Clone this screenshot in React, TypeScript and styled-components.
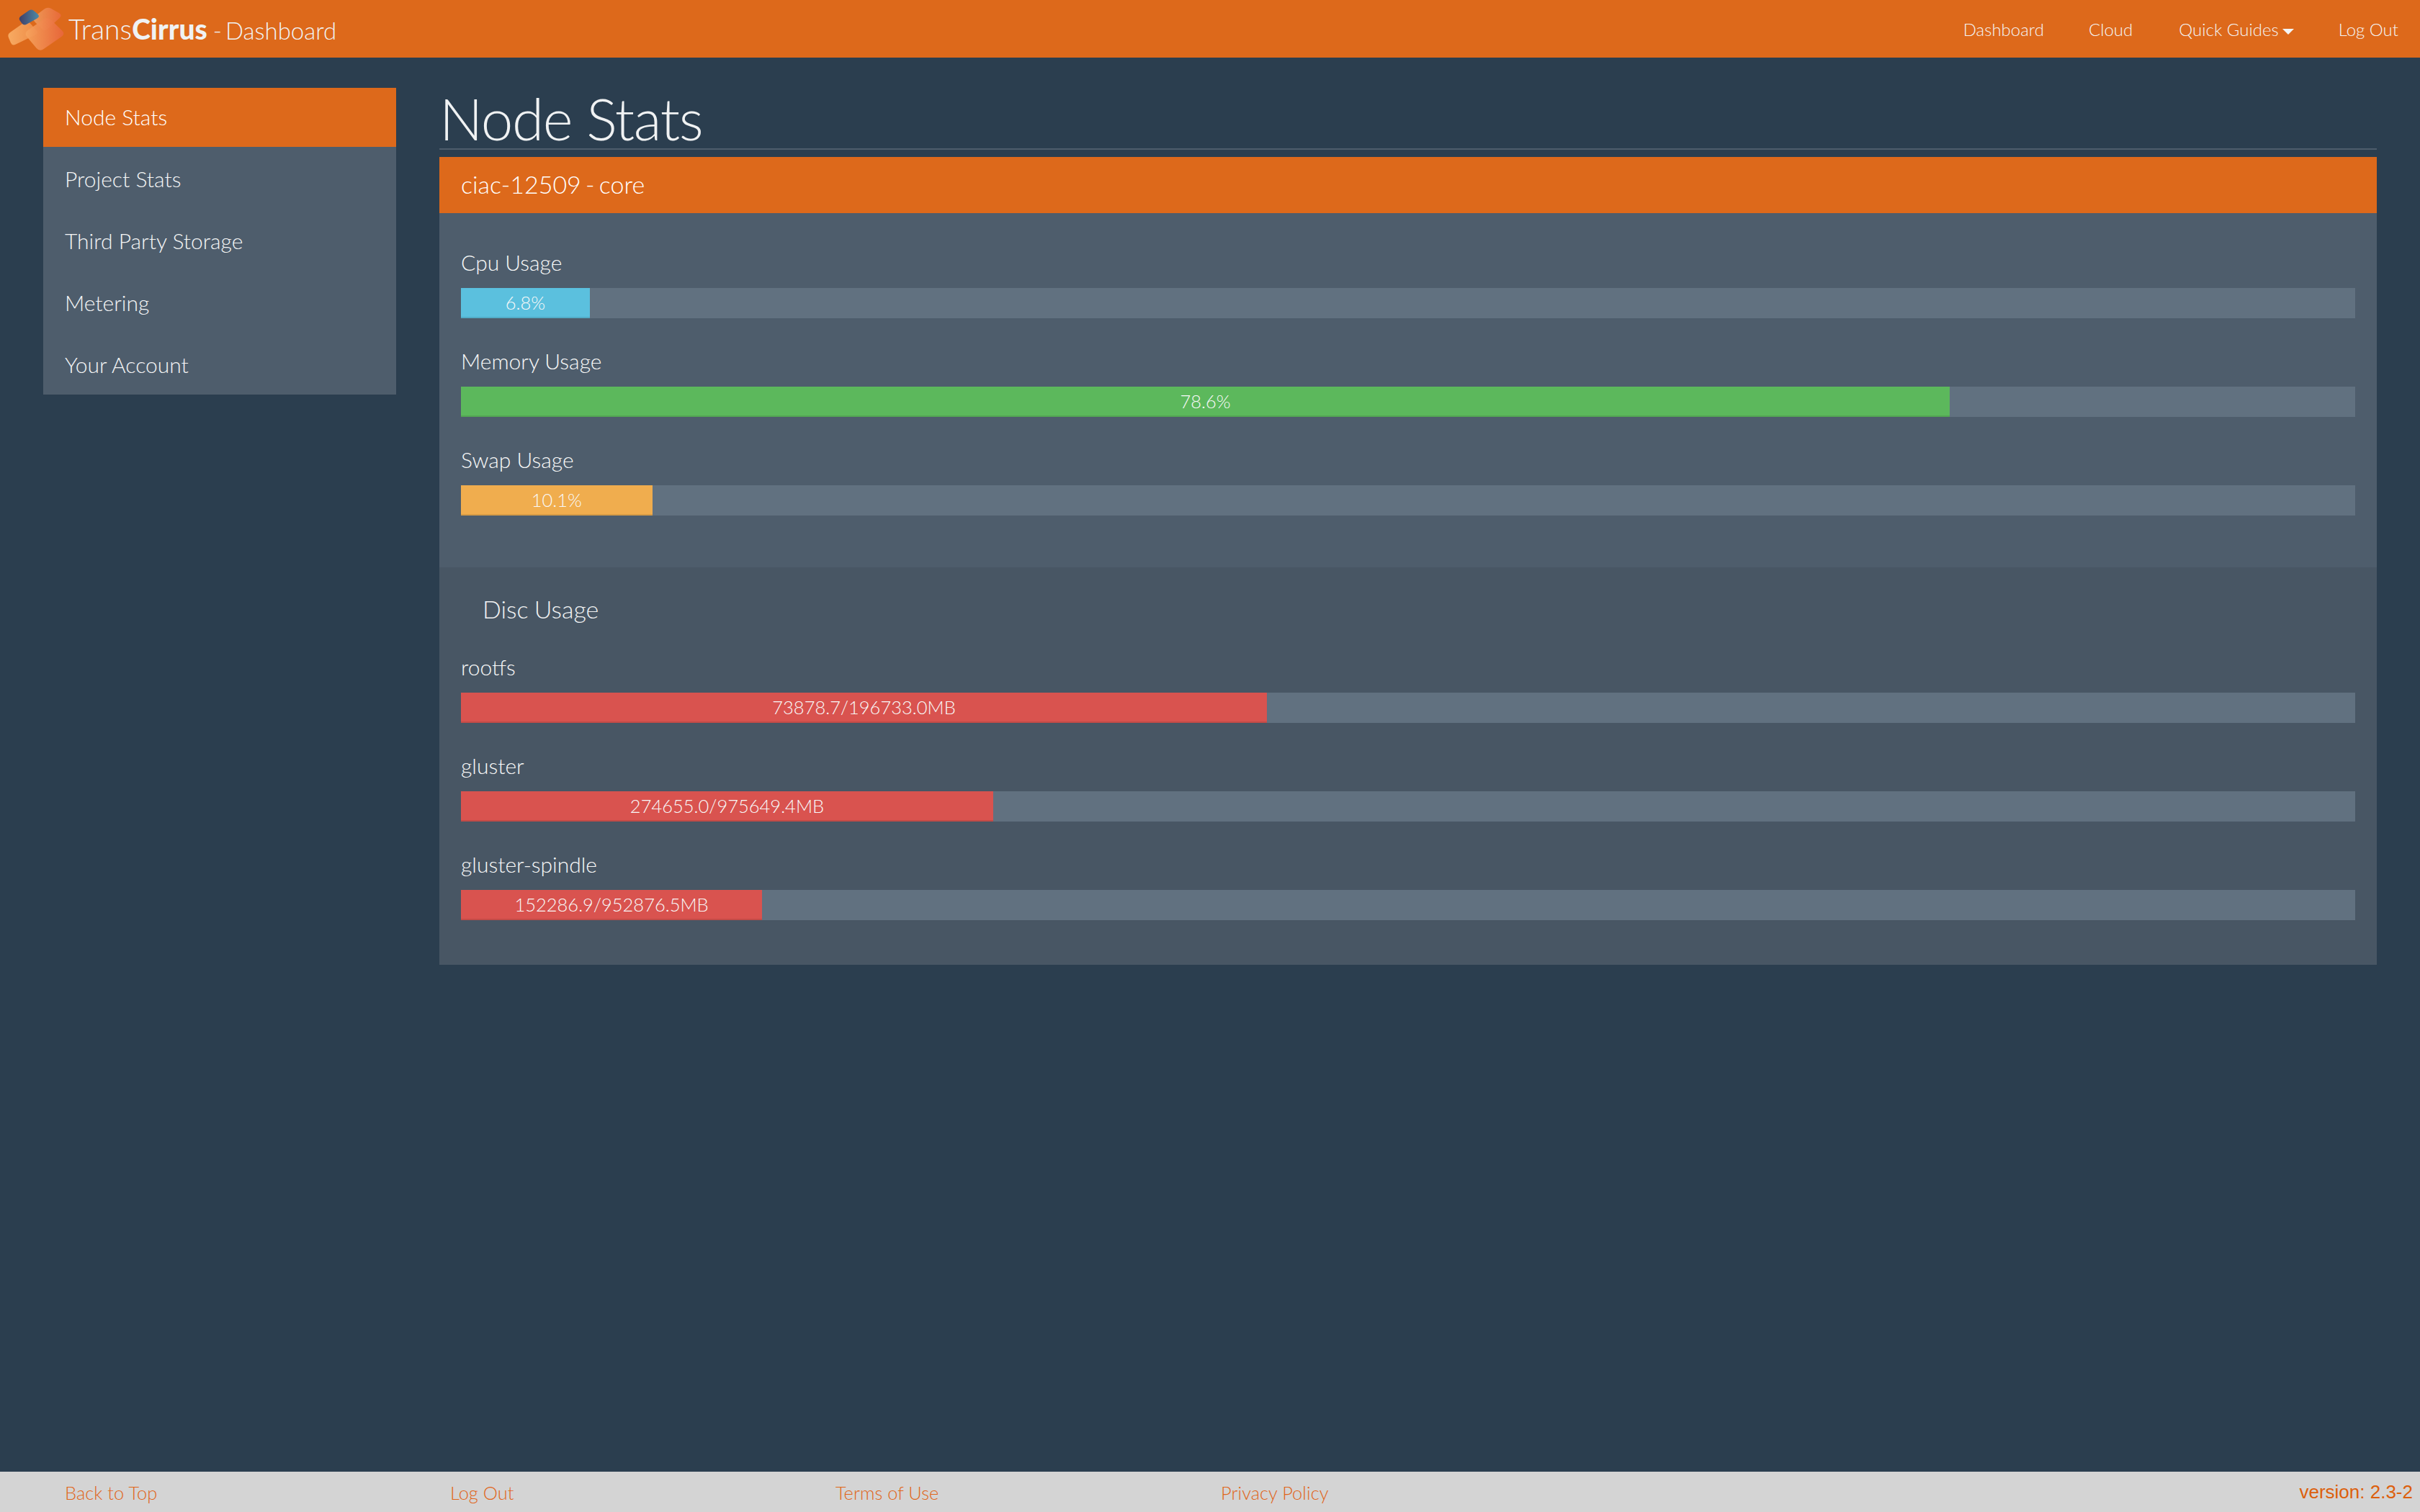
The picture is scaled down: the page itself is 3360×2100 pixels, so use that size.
import React from "react";
import styled, { createGlobalStyle } from "styled-components";

const Global = createGlobalStyle`
  html, body { margin: 0; padding: 0; height: 100%; }
  body { background: #2b3e4f; color: #ecf0f1; font-family: Lato, "Liberation Sans", sans-serif; font-weight: 300; }
`;

const Page = styled.div`
  min-height: 100vh;
  display: flex;
  flex-direction: column;
`;

const TopBar = styled.header`
  height: 80px;
  background: #dd691b;
  display: flex;
  align-items: center;
  justify-content: space-between;
  padding: 0 30px 0 8px;
`;

const Brand = styled.div`
  display: flex;
  align-items: center;
  font-size: 39px;
  color: #f0f2f3;
  white-space: nowrap;
  b { font-weight: 900; }
`;

const BrandSub = styled.span`
  font-size: 33px;
  margin-left: 8px;
  word-spacing: -4px;
  padding-top: 3px;
`;

const TopNav = styled.nav`
  display: flex;
  align-items: center;
  gap: 62px;
  font-size: 24px;
  color: #f4f5f6;
`;

const NavItem = styled.span<{ $menu?: boolean }>`
  margin-left: ${(p) => (p.$menu ? "2px" : "0")};
`;

const Caret = styled.span`
  display: inline-block;
  margin-left: 5px;
  border-left: 8px solid transparent;
  border-right: 8px solid transparent;
  border-top: 8px solid #f4f5f6;
  vertical-align: 2px;
`;

const Body = styled.main`
  flex: 1;
  display: grid;
  grid-template-columns: 490px 1fr;
  column-gap: 60px;
  padding: 42px 60px 0;
  align-items: start;
`;

const Side = styled.ul`
  list-style: none;
  margin: 0;
  padding: 0;
  background: #4e5d6c;
`;

const SideItem = styled.li<{ $active?: boolean }>`
  height: 86px;
  box-sizing: border-box;
  display: flex;
  align-items: center;
  padding: ${(p) => (p.$active ? "0 30px 2px" : "1px 30px 0")};
  font-size: 30px;
  color: ${(p) => (p.$active ? "#fff" : "#f4f5f6")};
  background: ${(p) => (p.$active ? "#dd691b" : "transparent")};
  &:first-child { height: 82px; }
`;

const Title = styled.h1`
  margin: 0 0 10px;
  height: 84px;
  border-bottom: 2px solid #4e5d6c;
  font-size: 80px;
  font-weight: 300;
  letter-spacing: -1.4px;
  line-height: 84px;
  color: #f0f2f3;
  box-sizing: content-box;
`;

const PanelHead = styled.div`
  height: 78px;
  box-sizing: border-box;
  padding: 0 30px 3px;
  background: #dd691b;
  display: flex;
  align-items: center;
  font-size: 34px;
  font-weight: 300;
  word-spacing: -3px;
  color: #fff;
`;

const Section = styled.section<{ $alt?: boolean }>`
  background: ${(p) => (p.$alt ? "#485664" : "#4e5d6c")};
  padding: ${(p) => (p.$alt ? "38px 30px 62px" : "45px 30px 72px")};
`;

const SectionTitle = styled.h3`
  margin: 0 0 37px;
  padding-left: 30px;
  font-size: 34px;
  line-height: 40px;
  font-weight: 300;
  word-spacing: -1px;
  color: #f0f2f3;
`;

const Stat = styled.div``;

const Label = styled.div`
  height: 46px;
  margin-bottom: 13px;
  font-size: 30px;
  line-height: 46px;
  color: #f8f9f9;
`;

const Track = styled.div`
  height: 42px;
  margin-bottom: 36px;
  background: #617180;
  ${Stat}:last-child & { margin-bottom: 0; }
`;

const Fill = styled.div<{ $color: string; $edge: string }>`
  height: 100%;
  box-sizing: border-box;
  background: ${(p) => p.$color};
  border-bottom: 2px solid ${(p) => p.$edge};
  text-align: center;
  font-size: 25.5px;
  line-height: 40px;
  color: #f8f9f9;
  white-space: nowrap;
`;

const Footer = styled.footer`
  height: 56px;
  background: #d4d4d4;
  display: flex;
  align-items: center;
  padding: 0 10px 0 90px;
  font-size: 25.5px;
  color: #e0661a;
`;

const FootLink = styled.a`
  width: 535px;
  padding-top: 2px;
`;

const Version = styled.span`
  margin-left: auto;
  font-family: "Liberation Sans", Arial, sans-serif;
  font-weight: 400;
  font-size: 26px;
  color: #dc5f0c;
`;

type Pt = [number, number];

const roundPoly = (pts: Pt[], r: number) => {
  const n = pts.length;
  const toward = (a: Pt, b: Pt): Pt => {
    const d = Math.hypot(b[0] - a[0], b[1] - a[1]);
    return [a[0] + ((b[0] - a[0]) * r) / d, a[1] + ((b[1] - a[1]) * r) / d];
  };
  let d = "";
  pts.forEach((p, i) => {
    const s = toward(p, pts[(i + n - 1) % n]);
    const e = toward(p, pts[(i + 1) % n]);
    d += `${i ? "L" : "M"}${s[0]} ${s[1]}Q${p[0]} ${p[1]} ${e[0]} ${e[1]}`;
  });
  return d + "Z";
};

const Logo = () => (
  <svg width="87" height="72" viewBox="8 4 87 72" style={{ flex: "none" }}>
    <defs>
      <linearGradient id="a" x1="0" x2="1" y1="0" y2="0">
        <stop offset="0" stopColor="#f6a45d" />
        <stop offset="1" stopColor="#e8663c" />
      </linearGradient>
      <linearGradient id="b" x1="0" x2="1" y1="0" y2="0">
        <stop offset="0" stopColor="#f0a060" />
        <stop offset="1" stopColor="#ea6a3e" />
      </linearGradient>
      <linearGradient id="c" x1="0" x2="1" y1="0" y2="0">
        <stop offset="0" stopColor="#403f68" />
        <stop offset="1" stopColor="#4f8aa6" />
      </linearGradient>
      <linearGradient id="d" x1="0" x2="1" y1="0" y2="0">
        <stop offset="0" stopColor="#f7aa62" />
        <stop offset="1" stopColor="#ee8a45" />
      </linearGradient>
    </defs>
    <path d={roundPoly([[10, 48], [38, 28], [54, 46], [17, 64]], 5)} fill="url(#d)" />
    <path d={roundPoly([[66, 9], [87, 21], [62, 44], [44, 26]], 6)} fill="url(#b)" opacity=".85" />
    <path d={roundPoly([[33, 46], [66, 23], [91, 47], [55, 72]], 7)} fill="url(#a)" opacity=".92" />
    <path d={roundPoly([[25, 25], [44, 12], [56, 23], [33, 36]], 5)} fill="url(#c)" />
  </svg>
);

const stats = [
  { label: "Cpu Usage", text: "6.8%", pct: 6.8, color: "#5bc0de", edge: "#52adc8" },
  { label: "Memory Usage", text: "78.6%", pct: 78.6, color: "#5cb85c", edge: "#53a653" },
  { label: "Swap Usage", text: "10.1%", pct: 10.1, color: "#f0ad4e", edge: "#d89c46" },
];
const discs = [
  { label: "rootfs", text: "73878.7/196733.0MB", pct: 42.55, color: "#d9534f", edge: "#c34b47" },
  { label: "gluster", text: "274655.0/975649.4MB", pct: 28.1, color: "#d9534f", edge: "#c34b47" },
  { label: "gluster-spindle", text: "152286.9/952876.5MB", pct: 15.9, color: "#d9534f", edge: "#c34b47" },
];

type Row = (typeof stats)[number];

const Rows = ({ rows }: { rows: Row[] }) => (
  <>
    {rows.map((r) => (
      <Stat key={r.label}>
        <Label>{r.label}</Label>
        <Track>
          <Fill $color={r.color} $edge={r.edge} style={{ width: `${r.pct}%` }}>
            {r.text}
          </Fill>
        </Track>
      </Stat>
    ))}
  </>
);

export default function App() {
  return (
    <Page>
      <Global />
      <TopBar>
        <Brand>
          <Logo />
          <span>
            Trans<b>Cirrus</b>
          </span>
          <BrandSub>- Dashboard</BrandSub>
        </Brand>
        <TopNav>
          <NavItem>Dashboard</NavItem>
          <NavItem>Cloud</NavItem>
          <NavItem $menu>
            Quick Guides
            <Caret />
          </NavItem>
          <NavItem>Log Out</NavItem>
        </TopNav>
      </TopBar>
      <Body>
        <Side>
          <SideItem $active>Node Stats</SideItem>
          <SideItem>Project Stats</SideItem>
          <SideItem>Third Party Storage</SideItem>
          <SideItem>Metering</SideItem>
          <SideItem>Your Account</SideItem>
        </Side>
        <div>
          <Title>Node Stats</Title>
          <PanelHead>ciac-12509 - core</PanelHead>
          <Section>
            <Rows rows={stats} />
          </Section>
          <Section $alt>
            <SectionTitle>Disc Usage</SectionTitle>
            <Rows rows={discs} />
          </Section>
        </div>
      </Body>
      <Footer>
        <FootLink>Back to Top</FootLink>
        <FootLink>Log Out</FootLink>
        <FootLink>Terms of Use</FootLink>
        <FootLink>Privacy Policy</FootLink>
        <Version>version: 2.3-2</Version>
      </Footer>
    </Page>
  );
}
